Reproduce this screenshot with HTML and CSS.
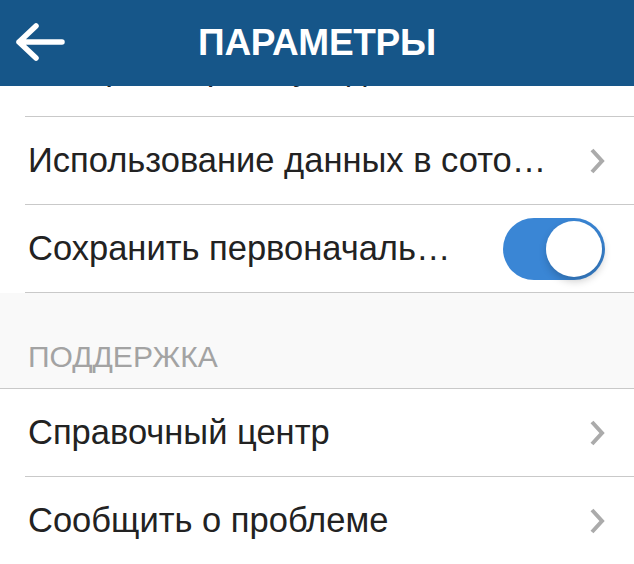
FILE: index.html
```
<!DOCTYPE html>
<html lang="ru">
<head>
    <meta charset="UTF-8">
    <meta name="viewport" content="width=device-width, initial-scale=1.0">
    <title>Параметры</title>
    <link rel="stylesheet" href="styles.css">
</head>
<body>
  <div class="topbar">
    <a class="back" href="#">
      <svg width="50" height="40" viewBox="0 0 50 40">
        <path d="M21 4 L4 20 L21 36 M4 20 L47 20" fill="none" stroke="#fff" stroke-width="5.5" stroke-linecap="round" stroke-linejoin="round"/>
      </svg>
    </a>
    <p class="title">ПАРАМЕТРЫ</p>
  </div>

  <div class="screen">
    <div class="list">
      <div class="row cut">
        <span class="label">Настройки push-уведомлений</span>
        <svg class="chevron" width="16" height="26" viewBox="0 0 16 26"><path d="M3 2 L13 13 L3 24" fill="none" stroke="#ababab" stroke-width="4"/></svg>
      </div>
      <div class="row">
        <span class="label">Использование данных в сото…</span>
        <svg class="chevron" width="16" height="26" viewBox="0 0 16 26"><path d="M3 2 L13 13 L3 24" fill="none" stroke="#ababab" stroke-width="4"/></svg>
      </div>
      <div class="row">
        <span class="label">Сохранить первоначаль…</span>
        <span class="switch on"><span class="knob"></span></span>
      </div>
      <div class="section">ПОДДЕРЖКА</div>
      <div class="row">
        <span class="label">Справочный центр</span>
        <svg class="chevron" width="16" height="26" viewBox="0 0 16 26"><path d="M3 2 L13 13 L3 24" fill="none" stroke="#ababab" stroke-width="4"/></svg>
      </div>
      <div class="row">
        <span class="label">Сообщить о проблеме</span>
        <svg class="chevron" width="16" height="26" viewBox="0 0 16 26"><path d="M3 2 L13 13 L3 24" fill="none" stroke="#ababab" stroke-width="4"/></svg>
      </div>
    </div>
  </div>
</body>
</html>
```

FILE: styles.css
```
/* Reset */
* {
  box-sizing: border-box;
  margin: 0;
  padding: 0;
}

body {
  font-family: 'Liberation Sans', Arial, sans-serif;
  background: #fff;
  color: #222;
  width: 634px;
  height: 564px;
  overflow: hidden;
  display: flex;
  flex-direction: column;
}

/* Top bar */
.topbar {
  height: 86px;
  flex-shrink: 0;
  background: #165689;
  display: flex;
  align-items: center;
  justify-content: center;
  position: relative;
  z-index: 2;
}

.topbar .back {
  position: absolute;
  left: 15px;
  top: 22px;
  display: block;
  width: 50px;
  height: 40px;
}

.topbar .title {
  color: #fff;
  font-size: 37px;
  font-weight: bold;
  letter-spacing: -0.3px;
}

/* Scrolled list, first row sits under the top bar */
.screen {
  flex: 1;
  overflow: hidden;
}

.list {
  margin-top: -57px;
}

.row {
  height: 88px;
  margin-left: 25px;
  padding-right: 31px;
  border-bottom: 1px solid #c9c9c9;
  display: flex;
  align-items: center;
  justify-content: space-between;
}

.row.cut {
  padding-bottom: 8px;
}

.row .label {
  font-size: 34.5px;
  padding-left: 3px;
  white-space: nowrap;
}

.chevron {
  display: block;
  margin-right: -2px;
}

/* Switch */
.switch {
  width: 102px;
  height: 62px;
  border-radius: 31px;
  background: #3a86d5;
  display: flex;
  align-items: center;
  padding: 0 3px;
  margin-right: -2px;
}

.switch.on {
  justify-content: flex-end;
}

.switch .knob {
  width: 56px;
  height: 56px;
  border-radius: 50%;
  background: #fff;
  box-shadow: 1px 4px 8px rgba(0, 0, 0, 0.22);
}

/* Section header */
.section {
  height: 96px;
  background: #f9f9f9;
  border-bottom: 1px solid #c9c9c9;
  display: flex;
  align-items: flex-end;
  padding: 0 0 14px 28px;
  font-size: 30px;
  color: #a3a3a3;
}
```
